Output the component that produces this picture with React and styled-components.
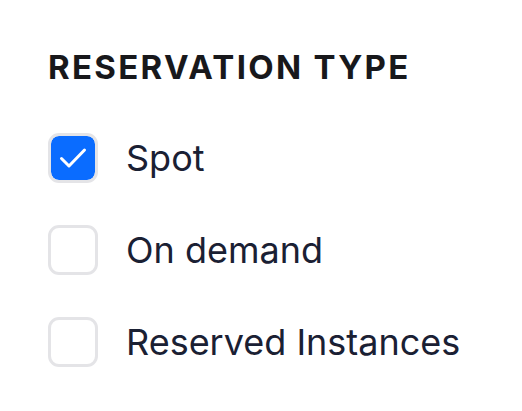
import React, { useState } from 'react';
import styled, { createGlobalStyle } from 'styled-components';

const GlobalStyle = createGlobalStyle`
  body {
    margin: 0;
    background: #ffffff;
    font-family: Inter, "Noto Sans", sans-serif;
  }
`;

const Panel = styled.div`
  padding: 47px 48px;
  display: flex;
  flex-direction: column;
`;

const Title = styled.h2`
  margin: 0 0 46px;
  font-size: 33px;
  font-weight: 700;
  letter-spacing: 0.07em;
  color: #18181b;
  text-transform: uppercase;
  line-height: 40px;
`;

const List = styled.div`
  display: flex;
  flex-direction: column;
  gap: 42px;
`;

const Row = styled.label`
  display: flex;
  align-items: center;
  gap: 28px;
  cursor: pointer;
`;

const Box = styled.span`
  width: 50px;
  height: 50px;
  box-sizing: border-box;
  border-radius: 11px;
  border: 3px solid #e4e4e7;
  background: ${(p) => (p.checked ? '#0a6cff' : '#ffffff')};
  background-clip: padding-box;
  display: flex;
  align-items: center;
  justify-content: center;
  flex-shrink: 0;
`;

const Label = styled.span`
  font-size: 36px;
  color: #1a2033;
  line-height: 50px;
`;

const options = ['Spot', 'On demand', 'Reserved Instances'];

const App = () => {
  const [checked, setChecked] = useState({ Spot: true });
  return (
    <Panel>
      <GlobalStyle />
      <Title>Reservation type</Title>
      <List>
        {options.map((opt) => (
          <Row key={opt} onClick={() => setChecked({ ...checked, [opt]: !checked[opt] })}>
            <Box checked={checked[opt]}>
              {checked[opt] && (
                <svg width="28" height="28" viewBox="0 0 28 28" fill="none">
                  <path d="M2.5 14.5L10 22L25.5 6" stroke="#fff" strokeWidth="3" strokeLinecap="round" strokeLinejoin="round" />
                </svg>
              )}
            </Box>
            <Label>{opt}</Label>
          </Row>
        ))}
      </List>
    </Panel>
  );
};

export default App;
